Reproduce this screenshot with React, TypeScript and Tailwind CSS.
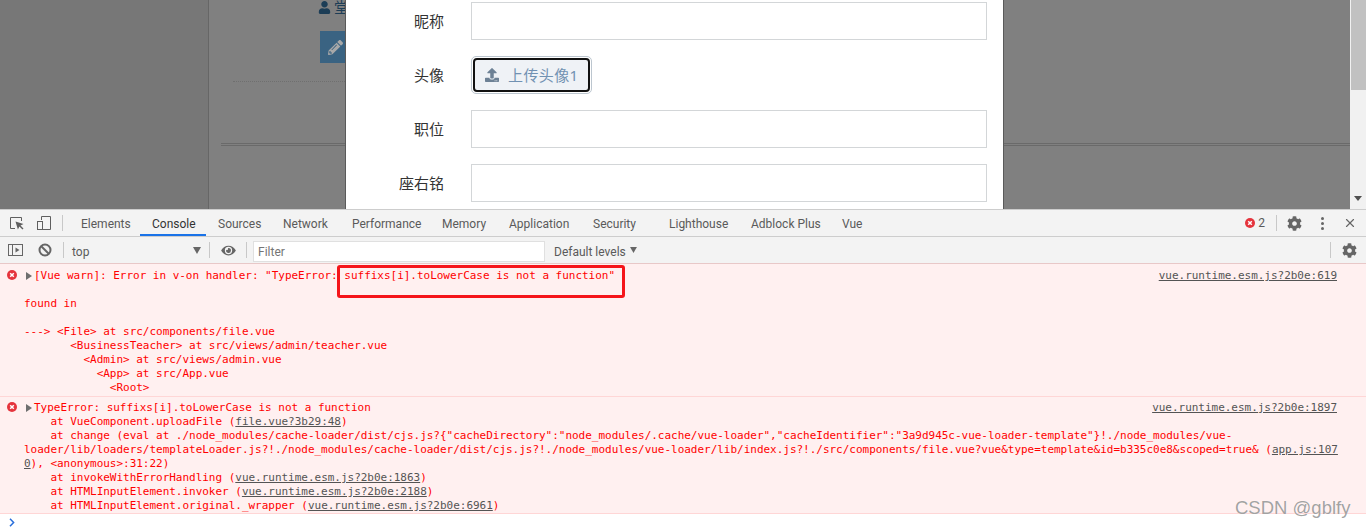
import { FaUser, FaPencilAlt, FaUpload, FaEye, FaCog } from 'react-icons/fa'
import { X } from 'lucide-react'

const tabs = [
  { label: 'Elements', width: 'w-[71px]' },
  { label: 'Console', width: 'w-[66px]', active: true },
  { label: 'Sources', width: 'w-[65px]' },
  { label: 'Network', width: 'w-[69px]' },
  { label: 'Performance', width: 'w-[90px]' },
  { label: 'Memory', width: 'w-[67px]' },
  { label: 'Application', width: 'w-[84px]' },
  { label: 'Security', width: 'w-[76px]' },
  { label: 'Lighthouse', width: 'w-[82px]' },
  { label: 'Adblock Plus', width: 'w-[91px]' },
  { label: 'Vue', width: 'w-[45px]' },
]

const uiFont = "font-['Noto_Sans','Noto_Sans_CJK_SC',sans-serif]"
const barFont = "font-['Roboto','Noto_Sans',sans-serif]"

function ErrorDot({ className }: { className?: string }) {
  return (
    <svg viewBox="0 0 10 10" className={className}>
      <circle cx="5" cy="5" r="5" fill="#e5343d" />
      <path d="M3.2 3.2l3.6 3.6M6.8 3.2L3.2 6.8" stroke="#fff" strokeWidth="1.5" />
    </svg>
  )
}

function Caret() {
  return (
    <svg viewBox="0 0 6 8" className="w-[6px] h-[8px] mr-[2px] shrink-0">
      <path d="M0 0l6 4-6 4z" fill="#6e6e6e" />
    </svg>
  )
}

function Sep({ className }: { className?: string }) {
  return <div className={`w-px h-[16px] bg-[#c8c8c8] shrink-0 ${className ?? ''}`} />
}

function Link({ children }: { children: string }) {
  return <span className="underline text-[#545454]">{children}</span>
}

function Line({ children }: { children?: React.ReactNode }) {
  return <div className="h-[14px] pl-[24px] whitespace-pre">{children}</div>
}

function FormRow({ label }: { label: string }) {
  return (
    <div className="flex items-center h-[38px]">
      <div className="w-[98px] text-right text-[15px] text-[#333]">{label}</div>
      <div className="ml-[27px] w-[516px] h-[38px] border border-[#d3d6d8] bg-white" />
    </div>
  )
}

function PageBehind() {
  return (
    <>
      <div className="w-[208px] h-full bg-[#777] border-r border-[#666] shrink-0 box-content" />
      <div className="flex-1 h-full bg-[#808080] overflow-hidden">
        <div className="flex items-center h-[14px] ml-[109px] text-[#1c3d56]">
          <FaUser className="w-[13px] h-[13px]" />
          <span className={`ml-[3px] text-[15px] ${uiFont}`}>堂</span>
        </div>
        <div className="flex items-center w-[32px] h-[32px] ml-[111px] mt-[17px] pl-[8px] bg-[#3a6382]">
          <FaPencilAlt className="w-[15px] h-[15px] text-[#a8a8a8]" />
        </div>
        <div className="ml-[24px] mt-[18px] w-[200px] border-t border-dotted border-[#6f6f6f]" />
        <div className="ml-[12px] mt-[61px] h-[3px] border-y border-[#6a6a6a]" />
      </div>
      <div className="w-[16px] h-full bg-[#f1f1f1] shrink-0 flex flex-col items-center justify-between">
        <div className="w-[15px] h-[90px] bg-[#c1c1c1]" />
        <svg viewBox="0 0 8 5" className="w-[8px] h-[5px] mb-[8px]">
          <path d="M0 0h8L4 5z" fill="#505050" />
        </svg>
      </div>
    </>
  )
}

function Modal() {
  return (
    <div className={`absolute left-[345px] top-0 bottom-0 w-[659px] bg-white border-x border-[#5a5a5a] flex flex-col gap-[16px] pt-[2px] ${uiFont}`}>
      <FormRow label="昵称" />
      <div className="flex items-center h-[38px]">
        <div className="w-[98px] text-right text-[15px] text-[#333]">头像</div>
        <div className="ml-[27px] w-[121px] h-[38px] rounded-[5px] border border-[#bcc6cf] p-px">
          <div className="w-full h-full rounded-[4px] border-2 border-[#111] bg-[#eff2f6] flex items-center pl-[10px] text-[15px] tracking-[0.4px] text-[#7191b2]">
            <FaUpload className="w-[14px] h-[14px] text-[#6d8195]" />
            <span className="ml-[9px]">上传头像1</span>
          </div>
        </div>
      </div>
      <FormRow label="职位" />
      <FormRow label="座右铭" />
    </div>
  )
}

function MainToolbar() {
  return (
    <div className={`flex items-center h-[28px] pr-[9px] bg-[#f3f3f3] border-y border-[#cdcdcd] text-[12px] text-[#5a5a5a] ${barFont}`}>
      <svg viewBox="0 0 16 16" className="w-[16px] h-[16px] ml-[9px] text-[#5f5f5f]" fill="none" stroke="currentColor">
        <path d="M6 13.5H1.5v-11h11V6" />
        <path d="M6.5 6.5l2.4 8 1.5-3 3.1 3 1-1-3-3 3-1.5z" fill="currentColor" stroke="none" />
      </svg>
      <svg viewBox="0 0 16 16" className="w-[16px] h-[16px] ml-[11px] text-[#5f5f5f]" fill="none" stroke="currentColor">
        <path d="M5.5 5V1.5h9v13h-9" />
        <rect x="1.5" y="6.5" width="5" height="8" />
      </svg>
      <Sep className="ml-[10px] mr-[6px]" />
      {tabs.map(t => (
        <div
          key={t.label}
          className={`${t.width} h-full pl-[12px] flex items-center shrink-0 ${t.active ? 'pt-[4px] border-b-2 border-[#1a73e8] text-[#333]' : 'pt-[2px]'}`}
        >
          {t.label}
        </div>
      ))}
      <ErrorDot className="w-[10px] h-[10px] ml-auto" />
      <span className="ml-[3px]">2</span>
      <Sep className="ml-[11px]" />
      <FaCog className="w-[15px] h-[15px] ml-[10px] text-[#666]" />
      <div className="ml-[19px] flex flex-col gap-[2px]">
        <div className="w-[3px] h-[3px] rounded-full bg-[#666]" />
        <div className="w-[3px] h-[3px] rounded-full bg-[#666]" />
        <div className="w-[3px] h-[3px] rounded-full bg-[#666]" />
      </div>
      <X className="w-[14px] h-[14px] ml-[19px] text-[#666]" />
    </div>
  )
}

function FilterBar() {
  return (
    <div className={`flex items-center h-[27px] pr-[9px] bg-[#f3f3f3] border-b border-[#e8c8c8] text-[12px] text-[#5a5a5a] ${barFont}`}>
      <svg viewBox="0 0 15 14" className="w-[15px] h-[14px] ml-[8px] text-[#666]" fill="none" stroke="currentColor">
        <rect x="0.5" y="1.5" width="14" height="11" />
        <path d="M4.5 1.5v11" />
        <path d="M7.5 4.5l4 2.5-4 2.5z" fill="currentColor" stroke="none" />
      </svg>
      <svg viewBox="0 0 14 14" className="w-[14px] h-[14px] ml-[15px] text-[#666]" fill="none" stroke="currentColor" strokeWidth="2">
        <circle cx="7" cy="7" r="5.5" />
        <path d="M3 3l8 8" />
      </svg>
      <Sep className="ml-[11px]" />
      <span className="ml-[8px] w-[121px] pt-[3px]">top</span>
      <svg viewBox="0 0 8 7" className="w-[8px] h-[7px]">
        <path d="M0 0h8L4 7z" fill="#666" />
      </svg>
      <Sep className="ml-[8px]" />
      <FaEye className="w-[17px] h-[13px] ml-[10px] text-[#666]" />
      <Sep className="ml-[9px]" />
      <div className="ml-[6px] mt-[2px] w-[292px] h-[21px] bg-white border border-[#e0e0e0] pl-[4px] pt-px flex items-center text-[#757575]">Filter</div>
      <span className="ml-[9px] pt-[3px]">Default levels</span>
      <svg viewBox="0 0 8 7" className="w-[7px] h-[6px] ml-[4px]">
        <path d="M0 0h8L4 7z" fill="#666" />
      </svg>
      <Sep className="ml-auto" />
      <FaCog className="w-[15px] h-[15px] ml-[11px] text-[#666]" />
    </div>
  )
}

function ConsoleOutput() {
  return (
    <div className="relative font-['DejaVu_Sans_Mono',monospace] text-[11px] leading-[14px] tracking-[-0.02px] text-[#f00]">
      <div className="h-[133px] pt-[5px] bg-[#fff0f0] border-b border-[#ffd6d6]">
        <div className="flex items-center h-[14px] pl-[7px] pr-[29px] whitespace-pre">
          <ErrorDot className="w-[10px] h-[10px] mr-[9px] mb-[3px]" />
          <Caret />
          <span className="flex-1">[Vue warn]: Error in v-on handler: "TypeError: suffixs[i].toLowerCase is not a function"</span>
          <Link>vue.runtime.esm.js?2b0e:619</Link>
        </div>
        <Line />
        <Line>found in</Line>
        <Line />
        <Line>{'---> <File> at src/components/file.vue'}</Line>
        <Line>{'       <BusinessTeacher> at src/views/admin/teacher.vue'}</Line>
        <Line>{'         <Admin> at src/views/admin.vue'}</Line>
        <Line>{'           <App> at src/App.vue'}</Line>
        <Line>{'             <Root>'}</Line>
      </div>
      <div className="h-[117px] pt-[4px] bg-[#fff0f0] border-b border-[#ffd6d6]">
        <div className="flex items-center h-[14px] pl-[7px] pr-[29px] whitespace-pre">
          <ErrorDot className="w-[10px] h-[10px] mr-[9px] mb-[3px]" />
          <Caret />
          <span className="flex-1">TypeError: suffixs[i].toLowerCase is not a function</span>
          <Link>vue.runtime.esm.js?2b0e:1897</Link>
        </div>
        <Line>{'    at VueComponent.uploadFile ('}<Link>file.vue?3b29:48</Link>)</Line>
        <Line>{'    at change (eval at ./node_modules/cache-loader/dist/cjs.js?{"cacheDirectory":"node_modules/.cache/vue-loader","cacheIdentifier":"3a9d945c-vue-loader-template"}!./node_modules/vue-'}</Line>
        <Line>loader/lib/loaders/templateLoader.js?!./node_modules/cache-loader/dist/cjs.js?!./node_modules/vue-loader/lib/index.js?!./src/components/file.vue?vue&amp;type=template&amp;id=b335c0e8&amp;scoped=true&amp; (<Link>app.js:107</Link></Line>
        <Line><Link>0</Link>), &lt;anonymous&gt;:31:22)</Line>
        <Line>{'    at invokeWithErrorHandling ('}<Link>vue.runtime.esm.js?2b0e:1863</Link>)</Line>
        <Line>{'    at HTMLInputElement.invoker ('}<Link>vue.runtime.esm.js?2b0e:2188</Link>)</Line>
        <Line>{'    at HTMLInputElement.original._wrapper ('}<Link>vue.runtime.esm.js?2b0e:6961</Link>)</Line>
      </div>
      {/* red box drawn over the screenshot */}
      <div className="absolute left-[337px] top-[1px] w-[288px] h-[33px] border-[3px] border-[#f5151a] rounded-[3px]" />
    </div>
  )
}

export default function App() {
  return (
    <div className="relative w-[1366px] h-[530px] overflow-hidden bg-white">
      <div className="relative flex h-[209px] overflow-hidden">
        <PageBehind />
        <Modal />
      </div>
      <MainToolbar />
      <FilterBar />
      <ConsoleOutput />
      <div className="flex items-center h-[16px] pl-[9px]">
        <svg viewBox="0 0 6 9" className="w-[6px] h-[9px]" fill="none" stroke="#2a6fdb" strokeWidth="1.5">
          <path d="M1 .8L4.6 4.5 1 8.2" />
        </svg>
      </div>
      <div className="absolute left-[1235px] top-[497px] font-['Liberation_Sans',sans-serif] text-[18.5px] leading-[22px] text-[#8a8a8a]/80 [text-shadow:0_0_1px_#fff]">
        CSDN @gblfy
      </div>
    </div>
  )
}
